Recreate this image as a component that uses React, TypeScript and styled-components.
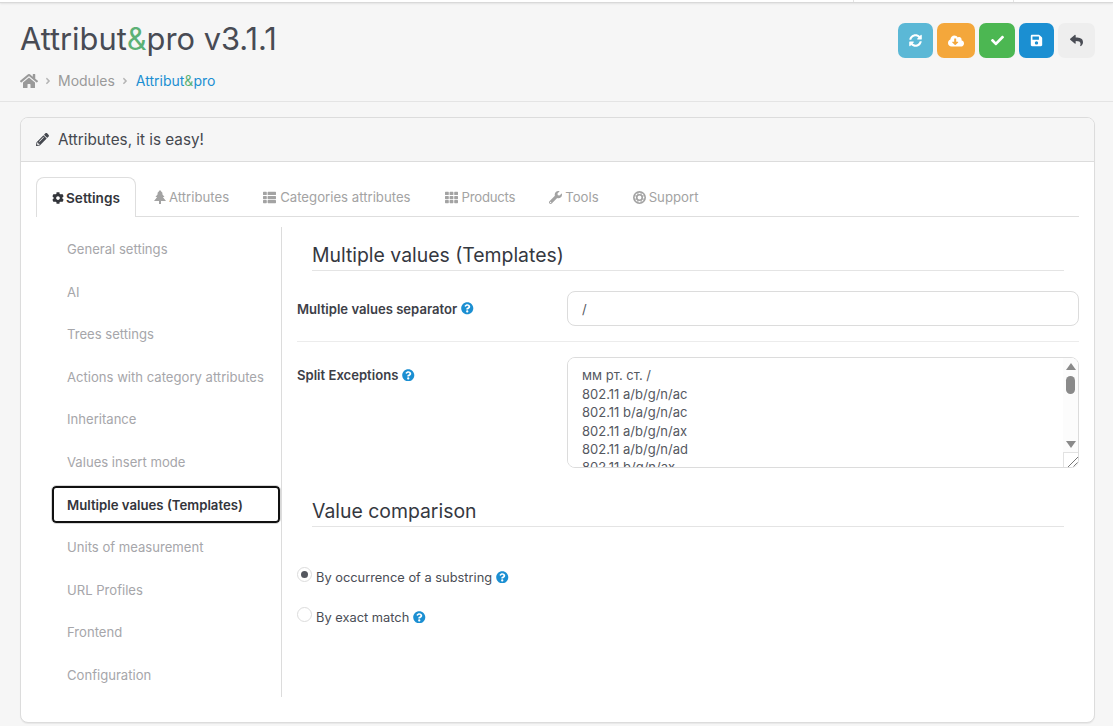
import React from "react";
import styled, { createGlobalStyle } from "styled-components";
import {
  FaHome,
  FaSyncAlt,
  FaCloudDownloadAlt,
  FaCheck,
  FaSave,
  FaReply,
  FaPencilAlt,
  FaCog,
  FaThList,
  FaTh,
  FaWrench,
  FaQuestionCircle,
  FaAngleRight,
} from "react-icons/fa";

const GlobalStyle = createGlobalStyle`
  html, body {
    margin: 0;
    padding: 0;
    height: 726px;
    overflow: hidden;
    background: #f6f6f6;
    font-family: Inter, "Liberation Sans", sans-serif;
    font-size: 13px;
    color: #4a4d55;
  }
  * { box-sizing: border-box; }
`;

const TopStrip = styled.div`
  height: 3px;
  background: #fff;
  border-bottom: 1px solid #d9d9d9;
  box-shadow: 0 1px 2px rgba(0, 0, 0, 0.08);
  display: flex;
  justify-content: flex-end;
  padding-right: 99px;
`;

const StripCell = styled.div`
  width: 161px;
  border-left: 1px solid #e4e4e4;
  border-right: 1px solid #e4e4e4;
`;

const PageHeader = styled.header`
  height: 99px;
  padding: 20px 18px 0 20px;
  border-bottom: 1px solid #e4e4e4;
  display: flex;
  justify-content: space-between;
  align-items: flex-start;
`;

const Title = styled.h1`
  margin: -2px 0 0;
  font-size: 30.8px;
  line-height: 36px;
  font-weight: 400;
  color: #484b54;
`;

const Amp = styled.span`
  color: #5cb176;
`;

const Breadcrumbs = styled.nav`
  margin-top: 15px;
  display: flex;
  align-items: center;
  font-size: 14px;
  line-height: 18px;
  color: #9a9a9a;

  svg.home {
    font-size: 18px;
    color: #9a9a9a;
  }
  svg.sep {
    font-size: 10px;
    color: #b5b5b5;
    margin: 0 5px;
  }
`;

const CrumbLink = styled.span`
  margin-left: 1px;
  color: #1b8fd2;
`;

const Actions = styled.div`
  display: flex;
  gap: 3.8px;
`;

const ActionButton = styled.button<{ $bg: string; $fg?: string; $w: number }>`
  width: ${(p) => p.$w}px;
  height: 35px;
  border: 0;
  border-radius: 7px;
  padding: 0;
  background: ${(p) => p.$bg};
  color: ${(p) => p.$fg || "#fff"};
  display: flex;
  align-items: center;
  justify-content: center;
  font-size: 13px;
`;

const Content = styled.main`
  padding: 15px 18px 0 20px;
`;

const Card = styled.section`
  height: 606px;
  background: #fff;
  border: 1px solid #dcdcdc;
  border-radius: 8px;
  overflow: hidden;
  box-shadow: 0 1px 1px rgba(0, 0, 0, 0.06);
`;

const CardHeading = styled.div`
  height: 44px;
  background: #f6f6f6;
  border-bottom: 1px solid #dcdcdc;
  padding: 0 15px 1px;
  display: flex;
  align-items: center;
  gap: 9px;
  font-size: 15.25px;
  color: #45484f;

  svg {
    font-size: 13px;
  }
`;

const CardBody = styled.div`
  padding: 15px 15px 0 15px;
`;

const Tabs = styled.ul`
  list-style: none;
  margin: 0;
  padding: 0;
  height: 40px;
  border-bottom: 1px solid #dedede;
  display: flex;
`;

const Tab = styled.li<{ $active?: boolean; $gap: number; $tight?: boolean }>`
  height: ${(p) => (p.$active ? "40px" : "39px")};
  padding: 0 15px;
  margin-right: 2px;
  display: flex;
  align-items: center;
  gap: ${(p) => p.$gap}px;
  font-size: ${(p) => (p.$active ? "13.6px" : "13.2px")};
  letter-spacing: ${(p) => (p.$tight ? "-0.25px" : "0")};
  font-weight: ${(p) => (p.$active ? 600 : 400)};
  color: ${(p) => (p.$active ? "#33353b" : "#a3a3a3")};
  background: #fff;
  border: 1px solid ${(p) => (p.$active ? "#dedede" : "transparent")};
  border-bottom: 0;
  border-radius: 8px 8px 0 0;
`;

const Columns = styled.div`
  display: flex;
  margin-top: 10px;
`;

const SideNav = styled.ul`
  list-style: none;
  margin: 0;
  padding: 0.8px 0 0 15px;
  width: 246px;
  height: 470px;
  flex: none;
  position: relative;
  display: flex;
  flex-direction: column;

  &::after {
    content: "";
    position: absolute;
    right: 0;
    top: 0;
    bottom: 0;
    width: 1px;
    background: #dcdcdc;
  }
`;

const SideItem = styled.li<{ $active?: boolean }>`
  height: 42.6px;
  flex: none;
  display: flex;
  align-items: center;
  padding-left: 16px;
  font-size: 13.1px;
  color: #a6a6aa;
  position: relative;

  ${(p) =>
    p.$active &&
    `
    z-index: 1;
    font-weight: 600;
    font-size: 13.2px;
    color: #33353b;
    background: #fff;
    margin: 3px 1px 3px 1px;
    height: 36.6px;
    width: 228px;
    border: 2px solid #111;
    border-radius: 4px;
    outline: 1px solid #d8d8d8;
    padding-left: 13px;
  `}
`;

const Panel = styled.div`
  flex: 1;
  padding: 0 0 0 15px;
`;

const Legend = styled.h3`
  margin: 0 15px 0 15px;
  height: 44px;
  padding-top: 16px;
  border-bottom: 1px solid #e4e4e4;
  font-size: 19.4px;
  line-height: 24px;
  font-weight: 400;
  color: #35383f;
`;

const FormRow = styled.div<{ $divider?: boolean }>`
  display: flex;
  padding: 20px 0 15px;
  border-bottom: ${(p) => (p.$divider ? "1px solid #ececec" : "0")};
`;

const FieldLabel = styled.label<{ $h: number }>`
  width: 270px;
  height: ${(p) => p.$h}px;
  flex: none;
  font-size: 13.1px;
  font-weight: 600;
  color: #3d4047;
  display: flex;
  align-items: center;
  gap: 4px;
`;

const Help = styled(FaQuestionCircle)`
  color: #1b8fd2;
  font-size: 12.5px;
  flex: none;
`;

const TextInput = styled.input`
  flex: 1;
  height: 35px;
  padding: 0 14px;
  border: 1px solid #dcdcdc;
  border-radius: 8px;
  font: 13px Inter, "Liberation Sans", sans-serif;
  color: #55585f;
  outline: none;
`;

const AreaBox = styled.div`
  flex: 1;
  height: 111px;
  margin-top: -5px;
  position: relative;
  border: 1px solid #dcdcdc;
  border-radius: 8px;
  overflow: hidden;
`;

const Area = styled.textarea`
  display: block;
  width: 100%;
  height: 100%;
  padding: 8.4px 14px;
  border: 0;
  outline: none;
  resize: none;
  overflow: hidden;
  font: 13px/18.4px Inter, "Liberation Sans", sans-serif;
  color: #55585f;
`;

const ScrollTrack = styled.div`
  position: absolute;
  top: 0;
  right: 0;
  bottom: 0;
  width: 15px;
  background: #fcfcfc;
  display: flex;
  flex-direction: column;
  align-items: center;
  padding-top: 5px;
`;

const ScrollArrow = styled.span<{ $down?: boolean }>`
  width: 0;
  height: 0;
  border-left: 5px solid transparent;
  border-right: 5px solid transparent;
  ${(p) => (p.$down ? "border-top: 7px solid #8a8a8a;" : "border-bottom: 7px solid #8a8a8a;")}
  ${(p) => (p.$down ? "margin-top: 47px;" : "")}
`;

const ScrollThumb = styled.span`
  width: 9px;
  height: 18px;
  margin-top: 6px;
  border-radius: 5px;
  background: #8a8a8a;
`;

const Resizer = styled.span`
  position: absolute;
  right: 0;
  bottom: 0;
  width: 15px;
  height: 15px;
  background:
    linear-gradient(135deg, transparent 62%, #777 62%, #777 67%, transparent 67%, transparent 80%, #777 80%, #777 85%, transparent 85%),
    #fff;
  border-left: 1px solid #e2e2e2;
  border-top: 1px solid #e2e2e2;
`;

const RadioGroup = styled.div`
  padding-top: 41px;
  display: flex;
  flex-direction: column;
  gap: 22px;
`;

const RadioRow = styled.label`
  display: flex;
  align-items: center;
  height: 18px;
  font-size: 12.85px;
  color: #4a4d55;
  gap: 4px;
`;

const RadioMark = styled.span<{ $on?: boolean }>`
  width: 15px;
  height: 15px;
  margin-top: -6px;
  border-radius: 50%;
  border: 1px solid #dcdcdc;
  background: #fff;
  flex: none;
  display: flex;
  align-items: center;
  justify-content: center;

  &::after {
    content: "";
    display: ${(p) => (p.$on ? "block" : "none")};
    width: 7px;
    height: 7px;
    border-radius: 50%;
    background: #55585f;
  }
`;

const TreeIcon = () => (
  <svg width="12" height="14" viewBox="0 0 12 14" fill="currentColor">
    <path d="M6 0 L9 3.5 H7.8 L10.5 7 H8.8 L12 11 H7 V14 H5 V11 H0 L3.2 7 H1.5 L4.2 3.5 H3 Z" />
  </svg>
);

const RingIcon = () => (
  <svg width="13" height="13" viewBox="0 0 16 16" fill="none" stroke="currentColor">
    <circle cx="8" cy="8" r="7" strokeWidth="2" />
    <circle cx="8" cy="8" r="3.4" strokeWidth="2" />
    <path d="M6 1.5V4.8M10 1.5V4.8M6 11.2V14.5M10 11.2V14.5M1.5 6H4.8M1.5 10H4.8M11.2 6H14.5M11.2 10H14.5" strokeWidth="1.2" />
  </svg>
);

const sideItems = [
  "General settings",
  "AI",
  "Trees settings",
  "Actions with category attributes",
  "Inheritance",
  "Values insert mode",
  "Multiple values (Templates)",
  "Units of measurement",
  "URL Profiles",
  "Frontend",
  "Configuration",
];

const exceptions = [
  "мм рт. ст. /",
  "802.11 a/b/g/n/ac",
  "802.11 b/a/g/n/ac",
  "802.11 a/b/g/n/ax",
  "802.11 a/b/g/n/ad",
  "802.11 b/g/n/ax",
].join("\n");

const App: React.FC = () => {
  return (
    <>
      <GlobalStyle />
      <TopStrip>
        <StripCell />
      </TopStrip>

      <PageHeader>
        <div>
          <Title>
            Attribut<Amp>&amp;</Amp>pro v3.1.1
          </Title>
          <Breadcrumbs>
            <FaHome className="home" />
            <FaAngleRight className="sep" />
            Modules
            <FaAngleRight className="sep" />
            <CrumbLink>
              Attribut<Amp>&amp;</Amp>pro
            </CrumbLink>
          </Breadcrumbs>
        </div>
        <Actions>
          <ActionButton $bg="#5bb8d6" $w={35}>
            <FaSyncAlt />
          </ActionButton>
          <ActionButton $bg="#f4a73b" $w={38}>
            <FaCloudDownloadAlt size={16} />
          </ActionButton>
          <ActionButton $bg="#4cb752" $w={36.7}>
            <FaCheck />
          </ActionButton>
          <ActionButton $bg="#1b8fd2" $w={35}>
            <FaSave />
          </ActionButton>
          <ActionButton $bg="#eeeeee" $fg="#4a4d55" $w={37}>
            <FaReply />
          </ActionButton>
        </Actions>
      </PageHeader>

      <Content>
        <Card>
          <CardHeading>
            <FaPencilAlt />
            Attributes, it is easy!
          </CardHeading>
          <CardBody>
            <Tabs>
              <Tab $active $gap={2}>
                <FaCog size={12} />
                Settings
              </Tab>
              <Tab $gap={3}>
                <TreeIcon />
                Attributes
              </Tab>
              <Tab $gap={4}>
                <FaThList size={13} />
                Categories attributes
              </Tab>
              <Tab $gap={4} $tight>
                <FaTh size={13} />
                Products
              </Tab>
              <Tab $gap={3}>
                <FaWrench size={13} />
                Tools
              </Tab>
              <Tab $gap={3}>
                <RingIcon />
                Support
              </Tab>
            </Tabs>

            <Columns>
              <SideNav>
                {sideItems.map((item) => (
                  <SideItem key={item} $active={item === "Multiple values (Templates)"}>
                    {item}
                  </SideItem>
                ))}
              </SideNav>

              <Panel>
                <Legend>Multiple values (Templates)</Legend>
                <FormRow $divider>
                  <FieldLabel $h={35}>
                    Multiple values separator <Help />
                  </FieldLabel>
                  <TextInput defaultValue="/" />
                </FormRow>
                <FormRow>
                  <FieldLabel $h={26}>
                    Split Exceptions <Help />
                  </FieldLabel>
                  <AreaBox>
                    <Area defaultValue={exceptions} />
                    <ScrollTrack>
                      <ScrollArrow />
                      <ScrollThumb />
                      <ScrollArrow $down />
                    </ScrollTrack>
                    <Resizer />
                  </AreaBox>
                </FormRow>
                <Legend>Value comparison</Legend>
                <RadioGroup>
                  <RadioRow>
                    <RadioMark $on />
                    By occurrence of a substring <Help />
                  </RadioRow>
                  <RadioRow>
                    <RadioMark />
                    By exact match <Help />
                  </RadioRow>
                </RadioGroup>
              </Panel>
            </Columns>
          </CardBody>
        </Card>
      </Content>
    </>
  );
};

export default App;
